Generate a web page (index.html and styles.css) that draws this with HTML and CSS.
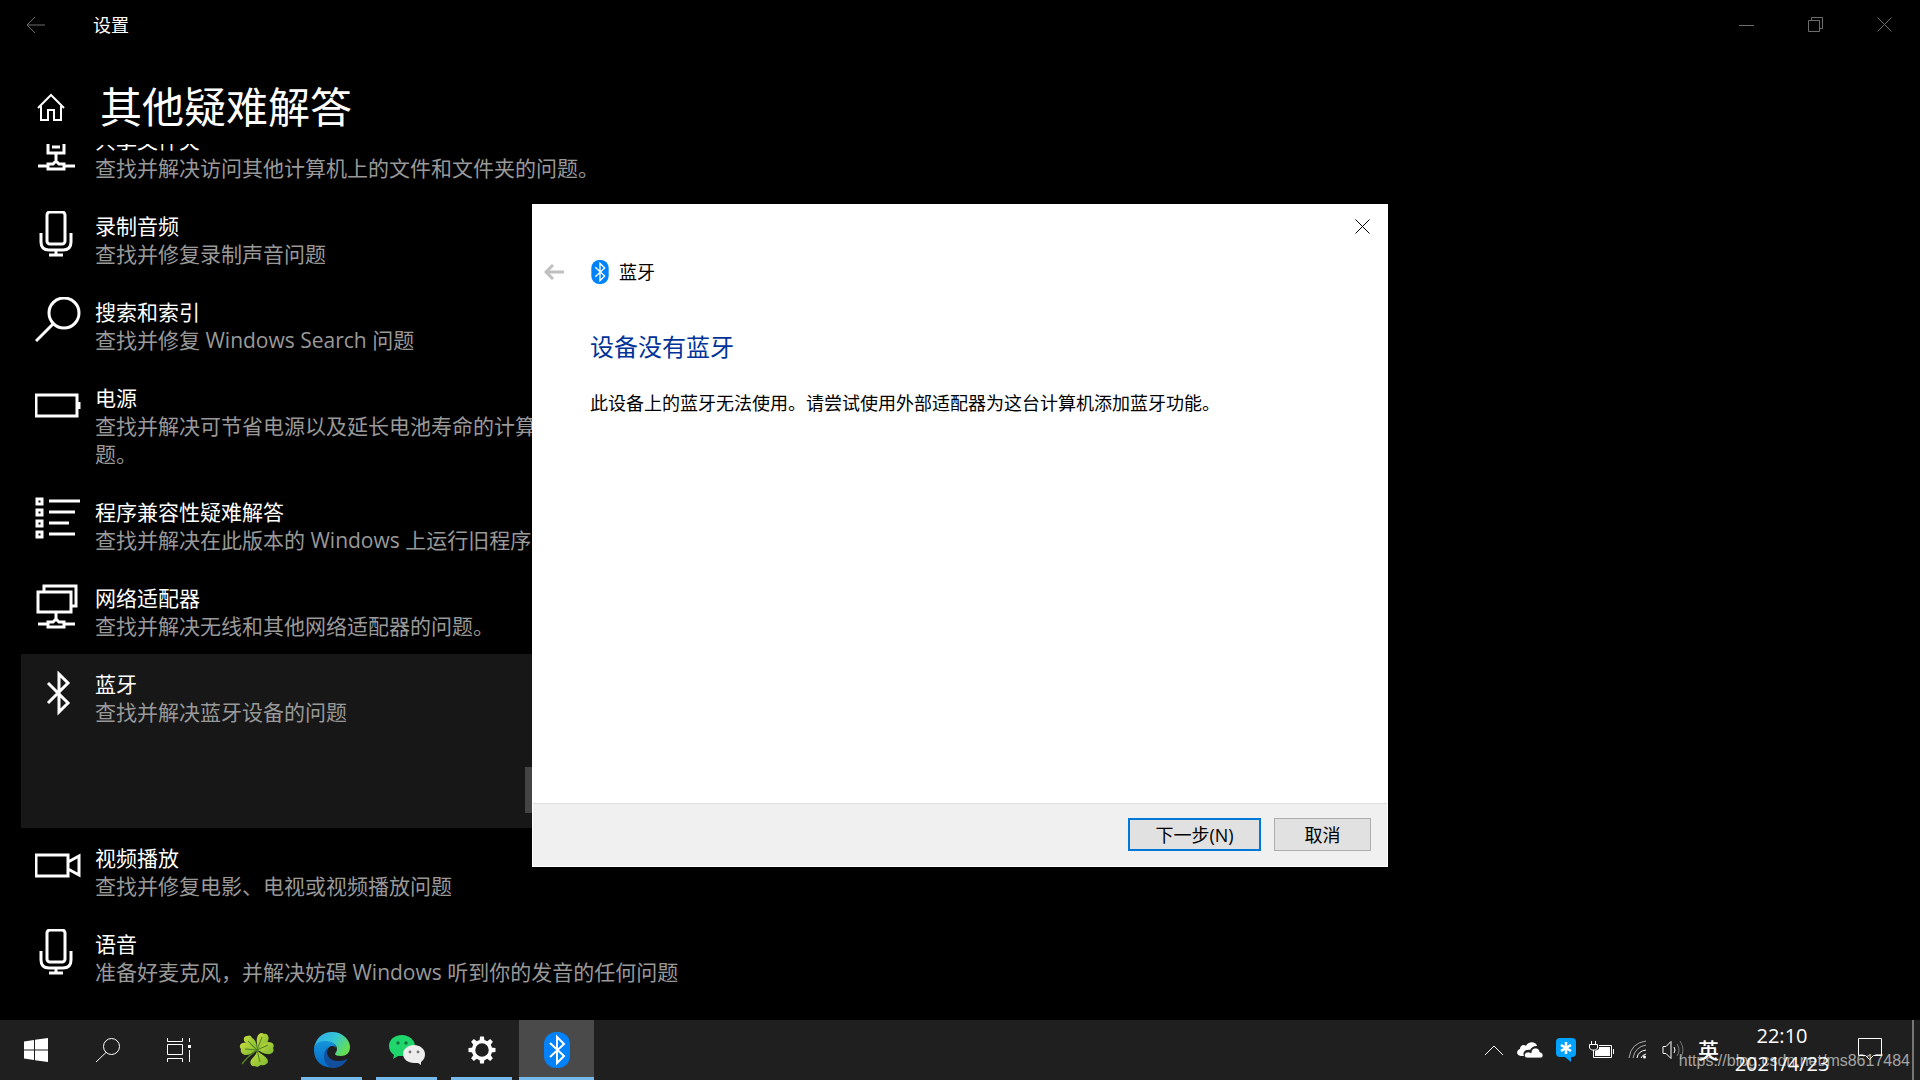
FILE: index.html
```html
<!DOCTYPE html>
<html lang="zh-CN">
<head>
<meta charset="utf-8">
<title>设置</title>
<link rel="stylesheet" href="styles.css">
</head>
<body>
<svg class="sprite" aria-hidden="true">
  <symbol id="i-mic" viewBox="0 0 48 48"><rect x="12" y="1" width="18" height="32" rx="3"/><path d="M6 22v9q0 8 8 8h14q8 0 8-8v-9M21 39v5M14 44h14"/></symbol>
  <symbol id="i-share" viewBox="0 0 48 48"><path d="M13 4h16v24H13zM17 13h8M17 22h8" /><path d="M21 28v8M3 41h10M29 41h11M13 44v-5h5l3-3 3 3h5v5z"/></symbol>
  <symbol id="i-search" viewBox="0 0 48 48"><circle cx="29" cy="16" r="15"/><path d="M18 27L1 44"/></symbol>
  <symbol id="i-battery" viewBox="0 0 48 48"><path d="M1 12h41v21H1zM44 19v7"/></symbol>
  <symbol id="i-list" viewBox="0 0 48 48"><path d="M2 2h5v5H2zM2 13h5v5H2zM2 24h5v5H2zM2 35h5v5H2zM14 4h31M14 15h26M14 26h20M14 37h26"/></symbol>
  <symbol id="i-network" viewBox="0 0 48 48"><path d="M3 9h33v20H3zM9 9V3h32v20h-5M21 29v7M3 41h10M29 41h11M13 44v-5h5l3-3 3 3h5v5z"/></symbol>
  <symbol id="i-bt" viewBox="0 0 48 48"><path d="M13 14l20 20-9 9V5l9 9-20 20"/></symbol>
  <symbol id="i-video" viewBox="0 0 48 48"><path d="M1 12h32v21H1zM33 19l11-6v19l-11-6"/></symbol>
  <symbol id="i-btlogo" viewBox="0 0 26 36"><rect width="26" height="36" rx="12" fill="#0082fc"/><path d="M6 11l14 13-7 7V5l7 7L6 25" fill="none" stroke="#fff" stroke-width="2"/></symbol>
</svg>

<main class="settings">
  <header class="titlebar">
    <button class="nav-back" aria-label="后退"><svg width="20" height="20" viewBox="0 0 20 20"><path d="M19 10H1M9 2l-8 8 8 8"/></svg></button>
    <span class="app-name">设置</span>
    <button class="win-btn" aria-label="最小化"><svg width="16" height="16"><path d="M0 8.500h15"/></svg></button>
    <button class="win-btn" aria-label="还原"><svg width="16" height="16"><path d="M.5 3.500h11v11H.5zM3.500 3V.5h11v11H12"/></svg></button>
    <button class="win-btn" aria-label="关闭"><svg width="16" height="16"><path d="M.5.5l14 14M14.500.5l-14 14"/></svg></button>
  </header>

  <div class="page-head">
    <button class="home" aria-label="主页"><svg width="30" height="30" viewBox="0 0 30 30"><path d="M2 16L15 3l13 13M5 14v14h7V18h6v10h7V14"/></svg></button>
    <h1>其他疑难解答</h1>
  </div>

  <div class="list-view">
    <ul class="list">
      <li class="item"><svg class="icon"><use href="#i-share"/></svg><div class="text"><h2>共享文件夹</h2><p>查找并解决访问其他计算机上的文件和文件夹的问题。</p></div></li>
      <li class="item"><svg class="icon"><use href="#i-mic"/></svg><div class="text"><h2>录制音频</h2><p>查找并修复录制声音问题</p></div></li>
      <li class="item"><svg class="icon"><use href="#i-search"/></svg><div class="text"><h2>搜索和索引</h2><p>查找并修复 Windows Search 问题</p></div></li>
      <li class="item"><svg class="icon"><use href="#i-battery"/></svg><div class="text"><h2>电源</h2><p>查找并解决可节省电源以及延长电池寿命的计算机电源设置问题。</p></div></li>
      <li class="item"><svg class="icon"><use href="#i-list"/></svg><div class="text"><h2>程序兼容性疑难解答</h2><p>查找并解决在此版本的 Windows 上运行旧程序的问题。</p></div></li>
      <li class="item"><svg class="icon"><use href="#i-network"/></svg><div class="text"><h2>网络适配器</h2><p>查找并解决无线和其他网络适配器的问题。</p></div></li>
      <li class="item selected"><svg class="icon"><use href="#i-bt"/></svg><div class="text"><h2>蓝牙</h2><p>查找并解决蓝牙设备的问题</p><button class="run">运行疑难解答</button></div></li>
      <li class="item"><svg class="icon"><use href="#i-video"/></svg><div class="text"><h2>视频播放</h2><p>查找并修复电影、电视或视频播放问题</p></div></li>
      <li class="item"><svg class="icon"><use href="#i-mic"/></svg><div class="text"><h2>语音</h2><p>准备好麦克风，并解决妨碍 Windows 听到你的发音的任何问题</p></div></li>
    </ul>
  </div>
</main>

<section class="dialog" role="dialog" aria-labelledby="dlg-name">
  <div class="dlg-top"><button class="dlg-close" aria-label="关闭"><svg width="16" height="16"><path d="M.5.5l14 14M14.500.5l-14 14"/></svg></button></div>
  <div class="dlg-nav">
    <button class="dlg-back" aria-label="上一步" disabled><svg width="20" height="16"><path d="M20 8H2M9 1L2 8l7 7"/></svg></button>
    <svg class="dlg-logo"><use href="#i-btlogo"/></svg>
    <span id="dlg-name">蓝牙</span>
  </div>
  <div class="dlg-body">
    <h2>设备没有蓝牙</h2>
    <p>此设备上的蓝牙无法使用。请尝试使用外部适配器为这台计算机添加蓝牙功能。</p>
  </div>
  <footer class="dlg-foot">
    <button class="btn primary">下一步(N)</button>
    <button class="btn">取消</button>
  </footer>
</section>

<nav class="taskbar">
  <div class="sys">
    <button class="sys-btn" aria-label="开始"><svg width="24" height="24" viewBox="0 0 24 24" fill="#fff"><path d="M0 3.400L10 2v9.400H0zM11 1.800L24 0v11.400H11zM0 12.400h10V22L0 20.600zM11 12.400h13V24l-13-1.800z"/></svg></button>
    <button class="sys-btn" aria-label="搜索"><svg width="26" height="26" class="line"><circle cx="16.500" cy="9.500" r="8"/><path d="M11 15.500L1 25"/></svg></button>
    <button class="sys-btn" aria-label="任务视图"><svg width="26" height="24" class="line"><path d="M.5 0v3.500h15V0M.5 6.500h15v10H.5zM.5 24v-3.500h15V24M22.500 0v4M22.500 12v12"/><path d="M21 7h3v3h-3z" fill="#fff" stroke="none"/></svg></button>
  </div>
  <div class="apps">
    <button class="app" aria-label="四叶草">
      <svg width="36" height="34" viewBox="0 0 36 34">
        <defs><linearGradient id="leaf" x1="0" y1="0" x2="1" y2="1"><stop offset="0" stop-color="#c9dd3c"/><stop offset="1" stop-color="#7ab834"/></linearGradient></defs>
        <path d="M18 17Q9 23 3 31" fill="none" stroke="#4f7d22" stroke-width="1.500"/>
        <g fill="url(#leaf)">
          <path d="M18 17C14 14 13 12 9 11 3 9 4 3 8 3c2-1 4-1 5 2 4 2 5 6 5 12z"/>
          <path d="M18 17C19 12 17 9 18 5c1-5 5-6 7-4 3-1 6 3 4 7-1 4-7 5-11 9z"/>
          <path d="M18 17C14 18 13 22 7 22c-4 0-6-4-5-6-3-3 0-7 5-6 4 0 7 4 11 7z"/>
          <path d="M18 17c4-3 6-7 11-8 5 0 7 3 5 6 2 3-1 7-6 6-4 0-6-3-10-4z"/>
          <path d="M18 17c0 4-3 6-6 10-2 4 1 7 4 6 2 2 4 0 6-1 3 1 7-1 7-4-1-5-7-6-11-11z"/>
        </g>
        <path d="M18 17L9 8M18 17l5-13M18 17L6 16M18 17l11-5M18 17l3 12" stroke="#478023" fill="none"/>
      </svg>
    </button>
    <button class="app open" aria-label="Microsoft Edge">
      <svg width="36" height="36" viewBox="0 0 36 36">
        <defs>
          <linearGradient id="e1" x1="0" y1="0" x2="1" y2=".5"><stop offset="0" stop-color="#2ca9e8"/><stop offset=".55" stop-color="#35c4d8"/><stop offset="1" stop-color="#63de55"/></linearGradient>
          <linearGradient id="e2" x1="0" y1="0" x2="0" y2="1"><stop offset="0" stop-color="#1595dc"/><stop offset="1" stop-color="#0668c4"/></linearGradient>
        </defs>
        <path d="M0 17C1 7 8 0 18 0c11 0 18 8 18 15 0 6-4 9-9 9-4 0-6-1-6-2 0-1 2-2 2-5 0-4-4-7-9-7C7 10 2 12 0 17z" fill="url(#e1)"/>
        <path d="M0 18c0-6 5-9 11-9 7 0 11 3 11 7-1-2-3-2-5-2-3 1-5 5-4 10 2 7 11 9 18 6-9 10-31 7-31-12z" fill="url(#e2)"/>
        <path d="M14 15c-3 7 1 14 10 14 4 0 7-1 9-2 1 0 1 0 0 1-3 5-8 8-14 8-6-1-9-6-9-12 0-4 2-7 4-9z" fill="#124f9e"/>
      </svg>
    </button>
    <button class="app open" aria-label="微信">
      <svg width="36" height="30" viewBox="0 0 36 30">
        <path d="M13 0C5 0 0 5 0 11c0 4 2 7 5 9l-1 4 5-3h4c7 0 13-4 13-10S20 0 13 0z" fill="#1fd66d"/>
        <path d="M25 10c-6 0-11 4-11 9s5 9 11 9h4l3 2v-3c3-2 4-5 4-8 0-5-5-9-11-9z" fill="#ededed"/>
        <g fill="#14723d"><circle cx="9" cy="8" r="1.700"/><circle cx="17" cy="8" r="1.700"/></g><g fill="#777"><circle cx="21" cy="17" r="1.400"/><circle cx="29" cy="17" r="1.400"/></g>
      </svg>
    </button>
    <button class="app open" aria-label="设置">
      <svg width="28" height="28" viewBox="-14 -14 28 28">
        <circle r="8.500" fill="none" stroke="#fff" stroke-width="3.500"/>
        <g fill="#fff"><path id="t" d="M-2.500-9l.6-4.500h3.800L2.500-9z"/><use href="#t" transform="rotate(45)"/><use href="#t" transform="rotate(90)"/><use href="#t" transform="rotate(135)"/><use href="#t" transform="rotate(180)"/><use href="#t" transform="rotate(225)"/><use href="#t" transform="rotate(270)"/><use href="#t" transform="rotate(315)"/></g>
      </svg>
    </button>
    <button class="app open active" aria-label="蓝牙"><svg width="26" height="36"><use href="#i-btlogo"/></svg></button>
  </div>
  <div class="tray">
    <svg width="20" height="12" class="line"><path d="M1 11l9-9 9 9"/></svg>
    <svg width="26" height="16" viewBox="0 0 26 16"><path d="M7 14H4c-5 0-5-6-1-7 0-4 4-5 6-3 2-5 10-5 11 0-4 0-6 2-7 4-4-1-8 2-6 6z" fill="#fff"/><path d="M10 16c-4-1-3-6 1-6 1 0 2 0 3 1 0-6 8-7 9-1 4 1 4 6 0 6z" fill="#fff" stroke="#1f1f1f" stroke-width=".8"/></svg>
    <svg width="20" height="24" viewBox="0 0 20 24"><path d="M4 0h12q4 0 4 4v11q0 4-4 4h-1v5l-6-5H4q-4 0-4-4V4q0-4 4-4z" fill="#00a2ff"/><path d="M10 4v12M5 7l10 6M15 7L5 13" stroke="#fff" stroke-width="2.500"/></svg>
    <svg width="26" height="18" class="line"><path d="M2.500 0v3M6.500 0v3M.5 3.500h8V7l-2 2h-4l-2-2zM4.500 9v7.500h18v-12H10M24.500 8v5"/><path d="M10 6h11v9H6v-5l4-2z" fill="#fff" stroke="none"/></svg>
    <svg width="20" height="20" class="line"><g stroke="#aaa"><path d="M1 18Q3 3 18 1M5 18Q7 7 18 5"/></g><path d="M9 18q1-7 9-8M13 18q1-3 5-4"/><circle cx="16.500" cy="17" r="1.500" fill="#fff" stroke="none"/></svg>
    <svg width="24" height="20" class="line"><path d="M2 6.500h3l5-5v17l-5-5H2zM13 7q2 3 0 6"/><path d="M16 4q4 6 0 12M19 1q6 9 0 18" stroke="#777"/></svg>
    <span class="ime">英</span>
    <div class="clock"><time>22:10</time><time>2021/4/23</time></div>
    <button class="note" aria-label="通知"><svg width="25" height="24" class="line"><path d="M.5.5h23v17h-8l-4 4-4-4h-7z"/></svg></button>
    <span class="peek"></span>
  </div>
</nav>
<span class="watermark">https://blog.csdn.net/ms8617484</span>
</body>
</html>
```
FILE: styles.css
```css
* { box-sizing: border-box; }

body {
  margin: 0;
  height: 100vh;
  display: flex;
  flex-direction: column;
  position: relative;
  overflow: hidden;
  background: #000;
  color: #fff;
  font-family: "Open Sans", "Noto Sans CJK SC", sans-serif;
  font-weight: 400;
}

h1, h2, p, ul { margin: 0; padding: 0; font-weight: inherit; }
ul { list-style: none; }
button { margin: 0; padding: 0; border: 0; background: none; color: inherit; font: inherit; }
svg { display: block; flex: none; }
.sprite { display: none; }
.line { fill: none; stroke: #fff; }

/* settings window */
.settings { flex: 1; min-height: 0; display: flex; flex-direction: column; }

.titlebar { height: 50px; flex: none; display: flex; align-items: center; padding-right: 1px; }
.titlebar svg { fill: none; stroke: #6e6e6e; }
.nav-back { width: 72px; height: 48px; display: grid; place-items: center; }
.app-name { flex: 1; padding-left: 21px; font-size: 18px; line-height: 24px; }
.win-btn { width: 69px; height: 48px; display: grid; place-items: center; }

.page-head { height: 94px; flex: none; display: flex; align-items: center; gap: 34px; padding: 20px 0 0 36px; }
.home svg { fill: none; stroke: #fff; stroke-width: 2; }
.page-head h1 { font-size: 42px; line-height: 56px; }

.list-view { flex: 1; min-height: 0; overflow: hidden; }
.list { width: 672px; margin: -34px 0 0 21px; }
.item { display: flex; gap: 12px; padding: 15px 0 14px 14px; }
.icon { width: 48px; height: 48px; fill: none; stroke: #fff; stroke-width: 3; }
.text { width: 587px; flex: none; display: flex; flex-direction: column; padding-top: 1px; font-size: 21px; line-height: 28px; }
.text h2 { font-size: 21px; }
.text p { color: #999; }
.selected { background: #171717; }
.run { align-self: flex-end; width: 157px; height: 46px; margin-top: 41px; margin-bottom: 1px; background: #444; }

/* troubleshooter dialog */
.dialog {
  position: absolute;
  top: 204px;
  left: calc(50% - 428px);
  width: 856px;
  height: 663px;
  display: flex;
  flex-direction: column;
  border: 1px solid #fff;
  background: #fff;
  color: #000;
  font-size: 18px;
}
.dlg-top { height: 44px; display: flex; justify-content: flex-end; }
.dlg-close { width: 48px; height: 44px; display: grid; place-items: center; }
.dlg-close svg { fill: none; stroke: #000; }
.dlg-nav { height: 46px; display: flex; align-items: center; padding-left: 11px; line-height: 24px; }
.dlg-back svg { fill: none; stroke: #bfbfbf; stroke-width: 3; }
.dlg-logo { width: 18px; height: 24px; margin: 0 10px 0 27px; }
.dlg-body { flex: 1; padding: 36px 57px 0; }
.dlg-body h2 { color: #003399; font-size: 24px; line-height: 32px; margin-bottom: 28px; }
.dlg-body p { line-height: 24px; }
.dlg-foot { display: flex; justify-content: flex-end; gap: 13px; padding: 14px 16px 15px; border-top: 1px solid #dfdfdf; background: #f0f0f0; }
.btn { width: 97px; height: 33px; border: 1px solid #adadad; background: #e1e1e1; line-height: 24px; }
.primary { width: 133px; border: 2px solid #0078d7; }

/* taskbar */
.taskbar { height: 60px; flex: none; display: flex; background: #1f1f1f; }
.sys { display: flex; padding-right: 3px; }
.sys-btn { width: 72px; display: grid; place-items: center; }
.apps { display: flex; flex: 1; }
.app { position: relative; width: 75px; display: grid; place-items: center; }
.open::after { content: ""; position: absolute; left: 7px; right: 7px; bottom: 0; height: 3px; background: #76b9ed; }
.active { background: #4a4a4a; }
.active::after { left: 0; right: 0; }

.tray { display: flex; align-items: center; gap: 13px; }
.ime { font-size: 21px; line-height: 28px; font-weight: 500; }
.clock { width: 113px; padding-right: 13px; display: flex; flex-direction: column; text-align: center; font-size: 20px; line-height: 28px; }
.note { display: grid; place-items: center; }
.peek { align-self: stretch; width: 8px; margin-left: 16px; border-left: 2px solid #777; }

.watermark {
  position: absolute;
  right: 10px;
  bottom: 9px;
  color: rgba(255, 255, 255, 0.6);
  font: 16px/20px "Liberation Sans", Arial, sans-serif;
}
```
